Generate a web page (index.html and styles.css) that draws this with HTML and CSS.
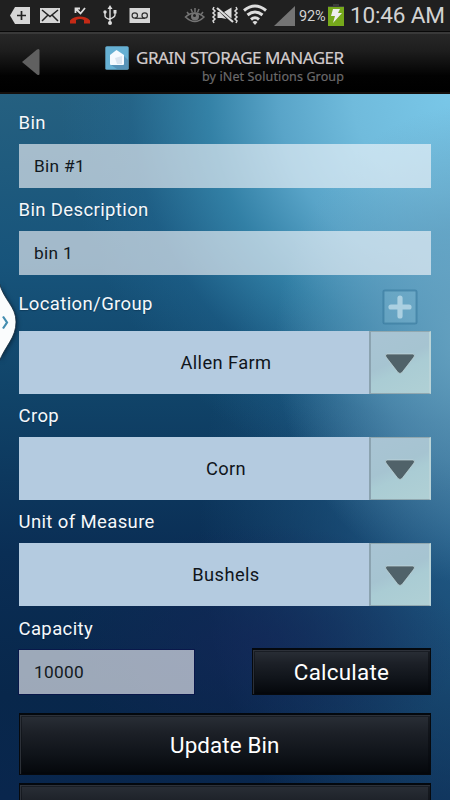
FILE: index.html
```html
<!DOCTYPE html>
<html lang="en">
<head>
<meta charset="utf-8">
<title>Grain Storage Manager</title>
<link rel="stylesheet" href="styles.css">
</head>
<body>
<div class="screen">
  <div class="status">
    <svg class="status-icons" width="298" height="31" viewBox="0 0 298 31">
      <path d="M10 15.500 15 7H30V24H15Z" fill="#d6d6d6"/>
      <path d="M17 15.500h9M21.500 11v9" stroke="#222" stroke-width="1.700"/>
      <path d="M40 8h20v15H40Z" fill="#d6d6d6"/>
      <path d="M42 10l8 6.500L58 10M42 21l6-6M58 21l-6-6" fill="none" stroke="#222" stroke-width="1.500"/>
      <path d="M70 23.500v-3c4-5.500 16-5.500 20 0v3h-6v-3.500q-4-2-8 0v3.500Z" fill="#c52a16"/>
      <path d="M75.500 13V8.500H80M76 9l4.500 4.500L85 8" fill="none" stroke="#ddd" stroke-width="1.800"/>
      <path d="M110 8v15M105 12v4q0 2 5 3.500M115 11v4q0 2-5 4" fill="none" stroke="#ddd" stroke-width="1.400"/>
      <path d="M107.500 9l2.500-4 2.500 4ZM113.500 10h3v3.500h-3Z" fill="#ddd"/>
      <circle cx="105" cy="12" r="1.700" fill="#ddd"/><circle cx="110" cy="23" r="2" fill="#ddd"/>
      <path d="M129.500 8h20.500v15h-20.500Z" fill="#d6d6d6"/>
      <circle cx="134.800" cy="15.500" r="2.700" fill="none" stroke="#333" stroke-width="1.200"/><circle cx="144.700" cy="15.500" r="2.700" fill="none" stroke="#333" stroke-width="1.200"/><path d="M135 18.300h10" stroke="#333" stroke-width="1.200"/>
      <g fill="none" stroke="#747474" stroke-width="1.500"><path d="M185.500 17q9-8 18.500 0-9 9-18.500 0Z"/><path d="M187 12l2 2.500M191 9l1.500 3.500M195 8v4M199 9l-1.500 3.500M203 12l-2 2.500"/></g>
      <circle cx="195" cy="16.500" r="4" fill="#747474"/><circle cx="194.500" cy="15.500" r="1.500" fill="#222"/>
      <path d="M214 7l-1 2 2 2-2 2 2 2-2 2 2 2-2 2 1 2M236 7l1 2-2 2 2 2-2 2 2 2-2 2 2 2-1 2" fill="none" stroke="#dcdcdc" stroke-width="1.500"/>
      <path d="M217 8 233 22" stroke="#dcdcdc" stroke-width="2.200"/>
      <path d="M231.500 7.500v11L224 12ZM217.500 12h2l7 7-5-1h-4Z" fill="#dcdcdc"/>
      <g fill="none" stroke="#ddd" stroke-width="3"><path d="M244 10.500q11-9 22 0M247.500 15q7.500-6 15 0M251 19.500q4-3.500 8 0"/></g><path d="M252.500 22q2.500-2 5 0l-2.500 3Z" fill="#ddd"/>
      <path d="M274 26 295 6V26Z" fill="#747474"/>
    </svg>
    <span class="percent">92%</span>
    <svg class="battery" width="16" height="24" viewBox="0 0 16 24"><path d="M5 1h6v2h5v3H0V3h5Z" fill="#3b3b3b"/><path d="M0 4h16v19H0Z" fill="#76a91b"/><path d="M5 6h7l-2 4h4L5 20l2-7H3Z" fill="#eee"/></svg>
    <span class="clock">10:46 AM</span>
  </div>
  <header class="header">
    <svg class="back" width="20" height="28" viewBox="0 0 20 28"><path d="M1 14 16 1.500q2.500-1.500 2.500 1v23q0 2.500-2.500 1Z" fill="#606060"/></svg>
    <svg class="logo" width="24" height="24" viewBox="0 0 24 24"><rect x=".3" y=".3" width="23.400" height="23.400" rx="1.500" fill="#66b0d3"/><path d="M18 9l5 5v9H12l-6-4Z" fill="#5793b8"/><path d="M11.500 4 19 9v9q0 1-1 1H6q-1 0-1-1V9Z" fill="#f5faff"/><path d="M10 12l7-2v8h-5Z" fill="#dbe5f0"/></svg>
    <div class="brand"><div class="title">GRAIN STORAGE MANAGER</div><div class="subtitle">by iNet Solutions Group</div></div>
  </header>
  <main class="form">
    <div class="label first"><span>Bin</span></div>
    <div class="field">Bin #1</div>
    <div class="label"><span>Bin Description</span></div>
    <div class="field">bin 1</div>
    <div class="label location"><span>Location/Group</span>
      <svg class="add" width="36" height="36" viewBox="0 0 36 36"><rect x="1.500" y="1.500" width="33" height="33" rx="1.500" fill="#a0d0e5" fill-opacity=".22" stroke="#2d7095" stroke-opacity=".5" stroke-width="2"/><path d="M18 9v18M9 18h18" stroke="#b3d5e4" stroke-width="5.200" stroke-linecap="round" stroke-opacity=".9"/></svg>
    </div>
    <div class="select"><div class="value">Allen Farm</div><div class="drop"><svg width="32" height="22" viewBox="0 0 32 22"><path d="M3 1h26q2.500.7 1 3L18 19.500q-2 2-4 0L2 4q-1.500-2.300 1-3Z" fill="#506269" stroke="#c6dadd" stroke-width=".7"/></svg></div></div>
    <div class="label"><span>Crop</span></div>
    <div class="select"><div class="value">Corn</div><div class="drop"><svg width="32" height="22" viewBox="0 0 32 22"><path d="M3 1h26q2.500.7 1 3L18 19.500q-2 2-4 0L2 4q-1.500-2.300 1-3Z" fill="#506269" stroke="#c6dadd" stroke-width=".7"/></svg></div></div>
    <div class="label"><span>Unit of Measure</span></div>
    <div class="select"><div class="value">Bushels</div><div class="drop"><svg width="32" height="22" viewBox="0 0 32 22"><path d="M3 1h26q2.500.7 1 3L18 19.500q-2 2-4 0L2 4q-1.500-2.300 1-3Z" fill="#506269" stroke="#c6dadd" stroke-width=".7"/></svg></div></div>
    <div class="label capacity"><span>Capacity</span></div>
    <div class="calc-row"><div class="field amount">10000</div><div class="button calc">Calculate</div></div>
    <div class="button update">Update Bin</div>
    <div class="button next"></div>
  </main>
  <svg class="handle" width="22" height="90" viewBox="0 0 22 90"><path d="M-1 4C4 23 16 28 16 44S5 68-1 84Z" fill="#fafcfd" stroke="#102636" stroke-opacity=".75"/><path d="M3 38.500 7 44.500 3 50.500" fill="none" stroke="#438db0" stroke-width="2.200"/></svg>
</div>
</body>
</html>
```
FILE: styles.css
```css
* { box-sizing: border-box; }
body { margin: 0; font-family: Roboto, "Noto Sans", sans-serif; }
.screen {
  position: relative; width: 450px; height: 800px; overflow: hidden;
  display: flex; flex-direction: column;
}
.status {
  height: 32px; flex: none; display: flex; align-items: center;
  background: #202020; border-bottom: 1px solid #080808; color: #d2d2d2;
}
.status-icons { flex: none; margin-right: 1px; }
.status-icons, .battery, .logo, .back { display: block; }
.percent { width: 29px; font-size: 14.5px; letter-spacing: -.1px; padding-top: 1px; white-space: nowrap; }
.battery { margin-top: -1px; }
.clock { margin-left: 6px; font-size: 22.6px; letter-spacing: -.2px; white-space: nowrap; }
.header {
  height: 62px; flex: none; display: flex; align-items: flex-start;
  background: linear-gradient(#272727, #1e1e1e 28%, #020202 72%, #000);
  border-top: 2px solid #393939; border-bottom: 2px solid #15100d;
}
.back { margin: 14px 0 0 21px; }
.logo { margin: 12px 0 0 64px; }
.brand { width: 208px; margin: 12px 0 0 7px; font-family: "Noto Sans", sans-serif; white-space: nowrap; }
.title { font-size: 17px; line-height: 24px; color: #d3cccd; letter-spacing: -.5px; -webkit-text-stroke: .2px #d3cccd; }
.subtitle { font-size: 12.5px; line-height: 14px; letter-spacing: .12px; color: #6b6a6b; text-align: right; -webkit-text-stroke: .2px #6b6a6b; }
.form {
  flex: 1; padding: 0 19px 0 18.5px; min-height: 0;
  background:
    radial-gradient(ellipse 200px 240px at 475px 250px, rgba(108,166,196,.9), rgba(100,158,190,.6) 50%, rgba(70,135,172,0)),
    radial-gradient(ellipse 390px 400px at 450px 0, #79c7e8, #70bbdc 25%, rgba(92,168,204,.95) 44%, rgba(56,138,176,.8) 62%, rgba(38,112,156,.3) 82%, rgba(28,100,144,0)),
    radial-gradient(ellipse 200px 120px at 260px 550px, rgba(20,38,88,.7), rgba(18,40,86,0)),
    radial-gradient(ellipse 270px 400px at 470px 430px, rgba(35,94,138,.95), rgba(16,62,106,0)),
    linear-gradient(#256080, #17547b 24%, #104368 43%, #0a2e55 65%, #08274b 85%, #09264d);
}
.label { height: 43.5px; padding-top: 1.5px; display: flex; align-items: center; color: #f5f8fb; font-size: 18.5px; letter-spacing: .38px; text-shadow: 0 1px 1px rgba(0,20,40,.3); }
.first { height: 49.5px; padding-top: 8px; }
.location { height: 56px; justify-content: space-between; }
.add { margin: 6px 13px 0 0; }
.field {
  height: 44px; padding-left: 15.5px; display: flex; align-items: center;
  background: rgba(249,248,252,.62); color: #111820; font-size: 17.3px; letter-spacing: .3px;
}
.select { height: 62.5px; display: flex; }
.value {
  flex: 1; display: flex; align-items: center; justify-content: center; padding-left: 65px;
  background: #b4cbe0; color: #10151b; font-size: 18.3px; letter-spacing: .4px;
}
.drop {
  width: 62.5px; display: flex; align-items: center; justify-content: center; padding: 3px 0 0 0;
  background: linear-gradient(155deg, #a9c4d4, #a6c4d1 45%, #aaccd4 60%, #b0d0d5);
  border: 1px solid #91a8b0; border-left: 2px solid #8ba3b0; border-right: 2px solid #bad4d8;
}
.capacity { height: 42px; padding-top: 4px; }
.calc-row { height: 47px; display: flex; justify-content: space-between; align-items: center; }
.amount { width: 175.5px; height: 44px; margin-top: 1px; box-shadow: 0 0 0 1px rgba(8,13,72,.6); }
.button {
  display: flex; align-items: center; justify-content: center; color: #fff;
  background: linear-gradient(#2a2f37, #1c2027 30%, #10141a 65%, #04070b);
  border: 1px solid #06090d; border-top: 2px solid #04080d;
  box-shadow: inset 1px 1px 1px #30353c, inset 0 0 0 2px rgba(4,7,11,.45);
}
.calc { width: 179px; height: 47px; font-size: 22.4px; letter-spacing: .25px; }
.update { height: 62px; margin-top: 18px; padding-top: 1px; font-size: 22.4px; letter-spacing: .1px; }
.next { height: 62px; margin-top: 8px; }
.handle { position: absolute; left: 0; top: 278px; display: block; filter: drop-shadow(1px 1px 2px rgba(0,15,30,.55)); }
```
